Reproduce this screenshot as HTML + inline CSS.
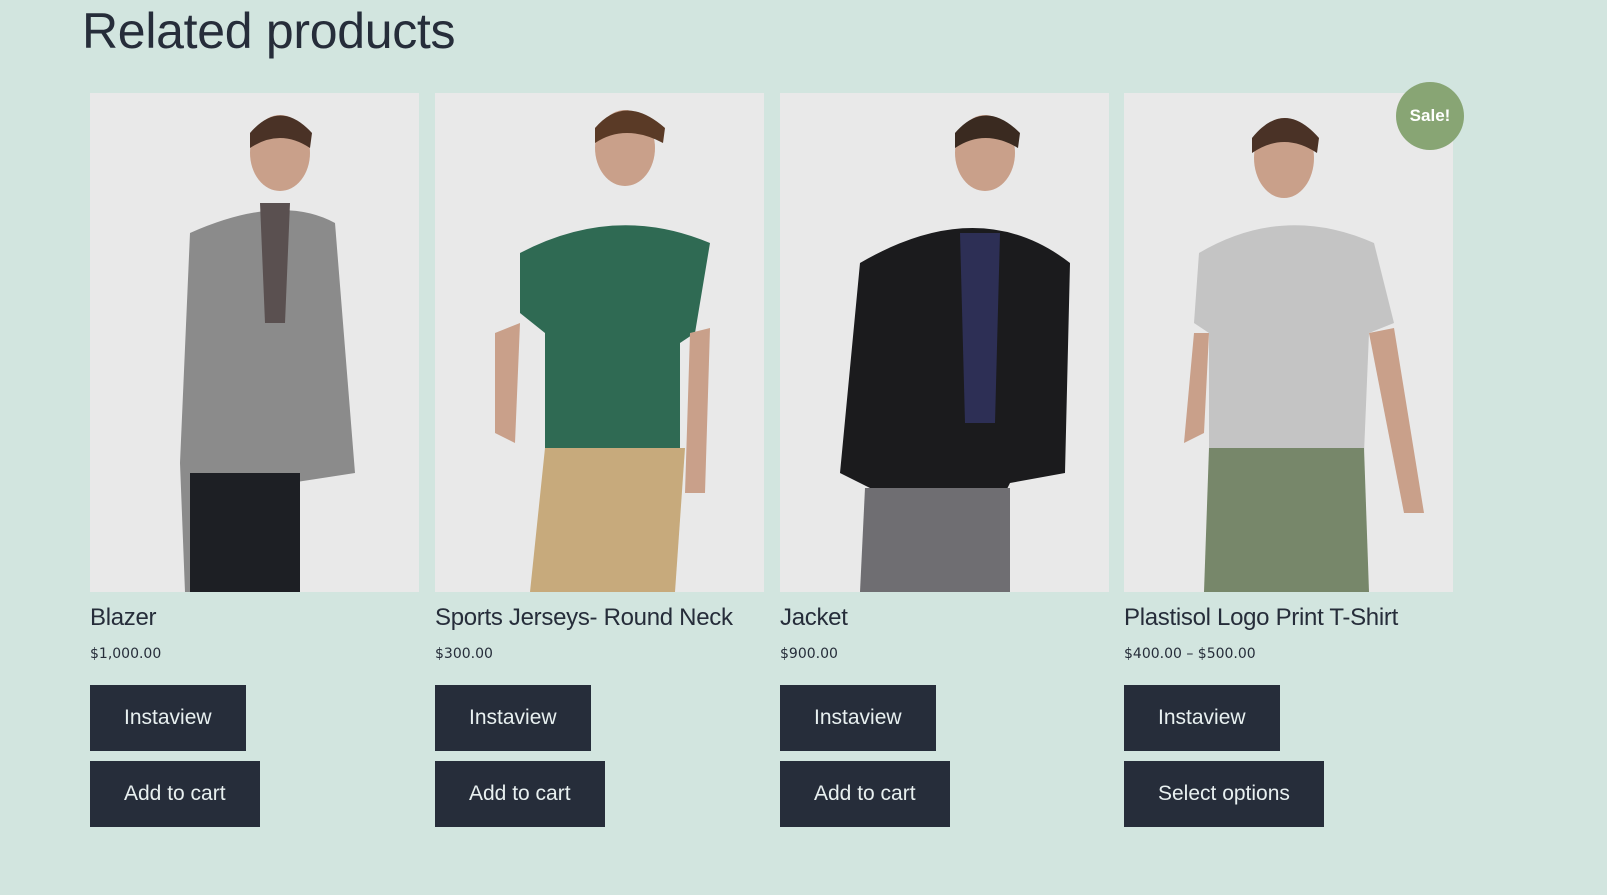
<!DOCTYPE html>
<html><head><meta charset="utf-8"><style>
body{margin:0;width:1607px;height:895px;background:#d2e5df;font-family:"DejaVu Sans","Liberation Sans",sans-serif;color:#262d3a;position:relative;overflow:hidden}
h2{position:absolute;left:82px;top:2px;margin:0;font-weight:400;font-size:50px;letter-spacing:-0.3px;font-family:"Liberation Sans",sans-serif}
.card{position:absolute;top:93px;width:329px}
.img{width:329px;height:499px;background:#e8e8e8;display:block}
.t{margin-top:12px;letter-spacing:-0.3px;font-family:"Liberation Sans",sans-serif;font-size:24px}
.p{font-size:14px;margin-top:14px}
.b{display:block;background:#262d3a;color:#e8f0f0;font-size:21px;height:66px;line-height:66px;padding:0 34px;width:max-content;font-family:"Liberation Sans",sans-serif;font-weight:500}
.b1{margin-top:23px}.b2{margin-top:10px}
.sale{position:absolute;left:1396px;top:82px;width:68px;height:68px;border-radius:50%;background:#88a574;color:#fff;font-weight:bold;font-size:17px;text-align:center;line-height:68px;font-family:"Liberation Sans",sans-serif}
</style></head><body>
<h2>Related products</h2>
<div class="card" style="left:90px">
<svg class="img" viewBox="0 0 329 499"><rect width="329" height="499" fill="#e9e9e9"/><ellipse cx="190" cy="60" rx="30" ry="38" fill="#c9a08a"/><path d="M160 40 Q190 5 222 40 L220 55 Q190 35 160 55Z" fill="#4a3226"/><path d="M100 140 Q190 100 245 130 L265 380 L200 390 L195 499 L95 499 L90 370 Z" fill="#8b8b8b"/><path d="M170 110 L200 110 L195 230 L175 230Z" fill="#5a5050"/><rect x="100" y="380" width="110" height="119" fill="#1d1f24"/></svg>
<div class="t">Blazer</div><div class="p">$1,000.00</div>
<span class="b b1">Instaview</span><span class="b b2">Add to cart</span></div>
<div class="card" style="left:435px">
<svg class="img" viewBox="0 0 329 499"><rect width="329" height="499" fill="#e9e9e9"/><ellipse cx="190" cy="55" rx="30" ry="38" fill="#c9a08a"/><path d="M160 35 Q190 0 230 35 L228 50 Q190 30 160 50Z" fill="#5a3a26"/><path d="M85 160 Q180 110 275 150 L260 240 L245 250 L245 360 L110 360 L110 240 L85 220Z" fill="#2f6a53"/><path d="M110 355 L250 355 L240 499 L95 499Z" fill="#c7aa7c"/><path d="M60 240 L85 230 L80 350 L60 340Z" fill="#c9a08a"/><path d="M255 240 L275 235 L270 400 L250 400Z" fill="#c9a08a"/></svg>
<div class="t">Sports Jerseys- Round Neck</div><div class="p">$300.00</div>
<span class="b b1">Instaview</span><span class="b b2">Add to cart</span></div>
<div class="card" style="left:780px">
<svg class="img" viewBox="0 0 329 499"><rect width="329" height="499" fill="#e9e9e9"/><ellipse cx="205" cy="60" rx="30" ry="38" fill="#c9a08a"/><path d="M175 40 Q205 5 240 40 L238 55 Q205 35 175 55Z" fill="#3a2a20"/><path d="M80 170 Q200 100 290 170 L285 380 L230 390 L225 400 L100 400 L60 380Z" fill="#1b1b1d"/><path d="M180 140 L220 140 L215 330 L185 330Z" fill="#2d2f55"/><path d="M85 395 L230 395 L230 499 L80 499Z" fill="#6f6e72"/></svg>
<div class="t">Jacket</div><div class="p">$900.00</div>
<span class="b b1">Instaview</span><span class="b b2">Add to cart</span></div>
<div class="card" style="left:1124px">
<svg class="img" viewBox="0 0 329 499"><rect width="329" height="499" fill="#e9e9e9"/><ellipse cx="160" cy="65" rx="30" ry="40" fill="#c9a08a"/><path d="M128 45 Q160 5 195 45 L193 60 Q160 38 128 60Z" fill="#4a3226"/><path d="M75 160 Q160 110 250 150 L270 230 L245 240 L240 360 L85 360 L85 240 L70 230Z" fill="#c4c4c4"/><path d="M85 355 L240 355 L245 499 L80 499Z" fill="#77876a"/><path d="M70 240 L85 240 L80 340 L60 350Z" fill="#c9a08a"/><path d="M245 240 L270 235 L300 420 L280 420Z" fill="#c9a08a"/></svg>
<div class="t">Plastisol Logo Print T-Shirt</div><div class="p">$400.00 – $500.00</div>
<span class="b b1">Instaview</span><span class="b b2">Select options</span></div>
<div class="sale">Sale!</div>
</body></html>
